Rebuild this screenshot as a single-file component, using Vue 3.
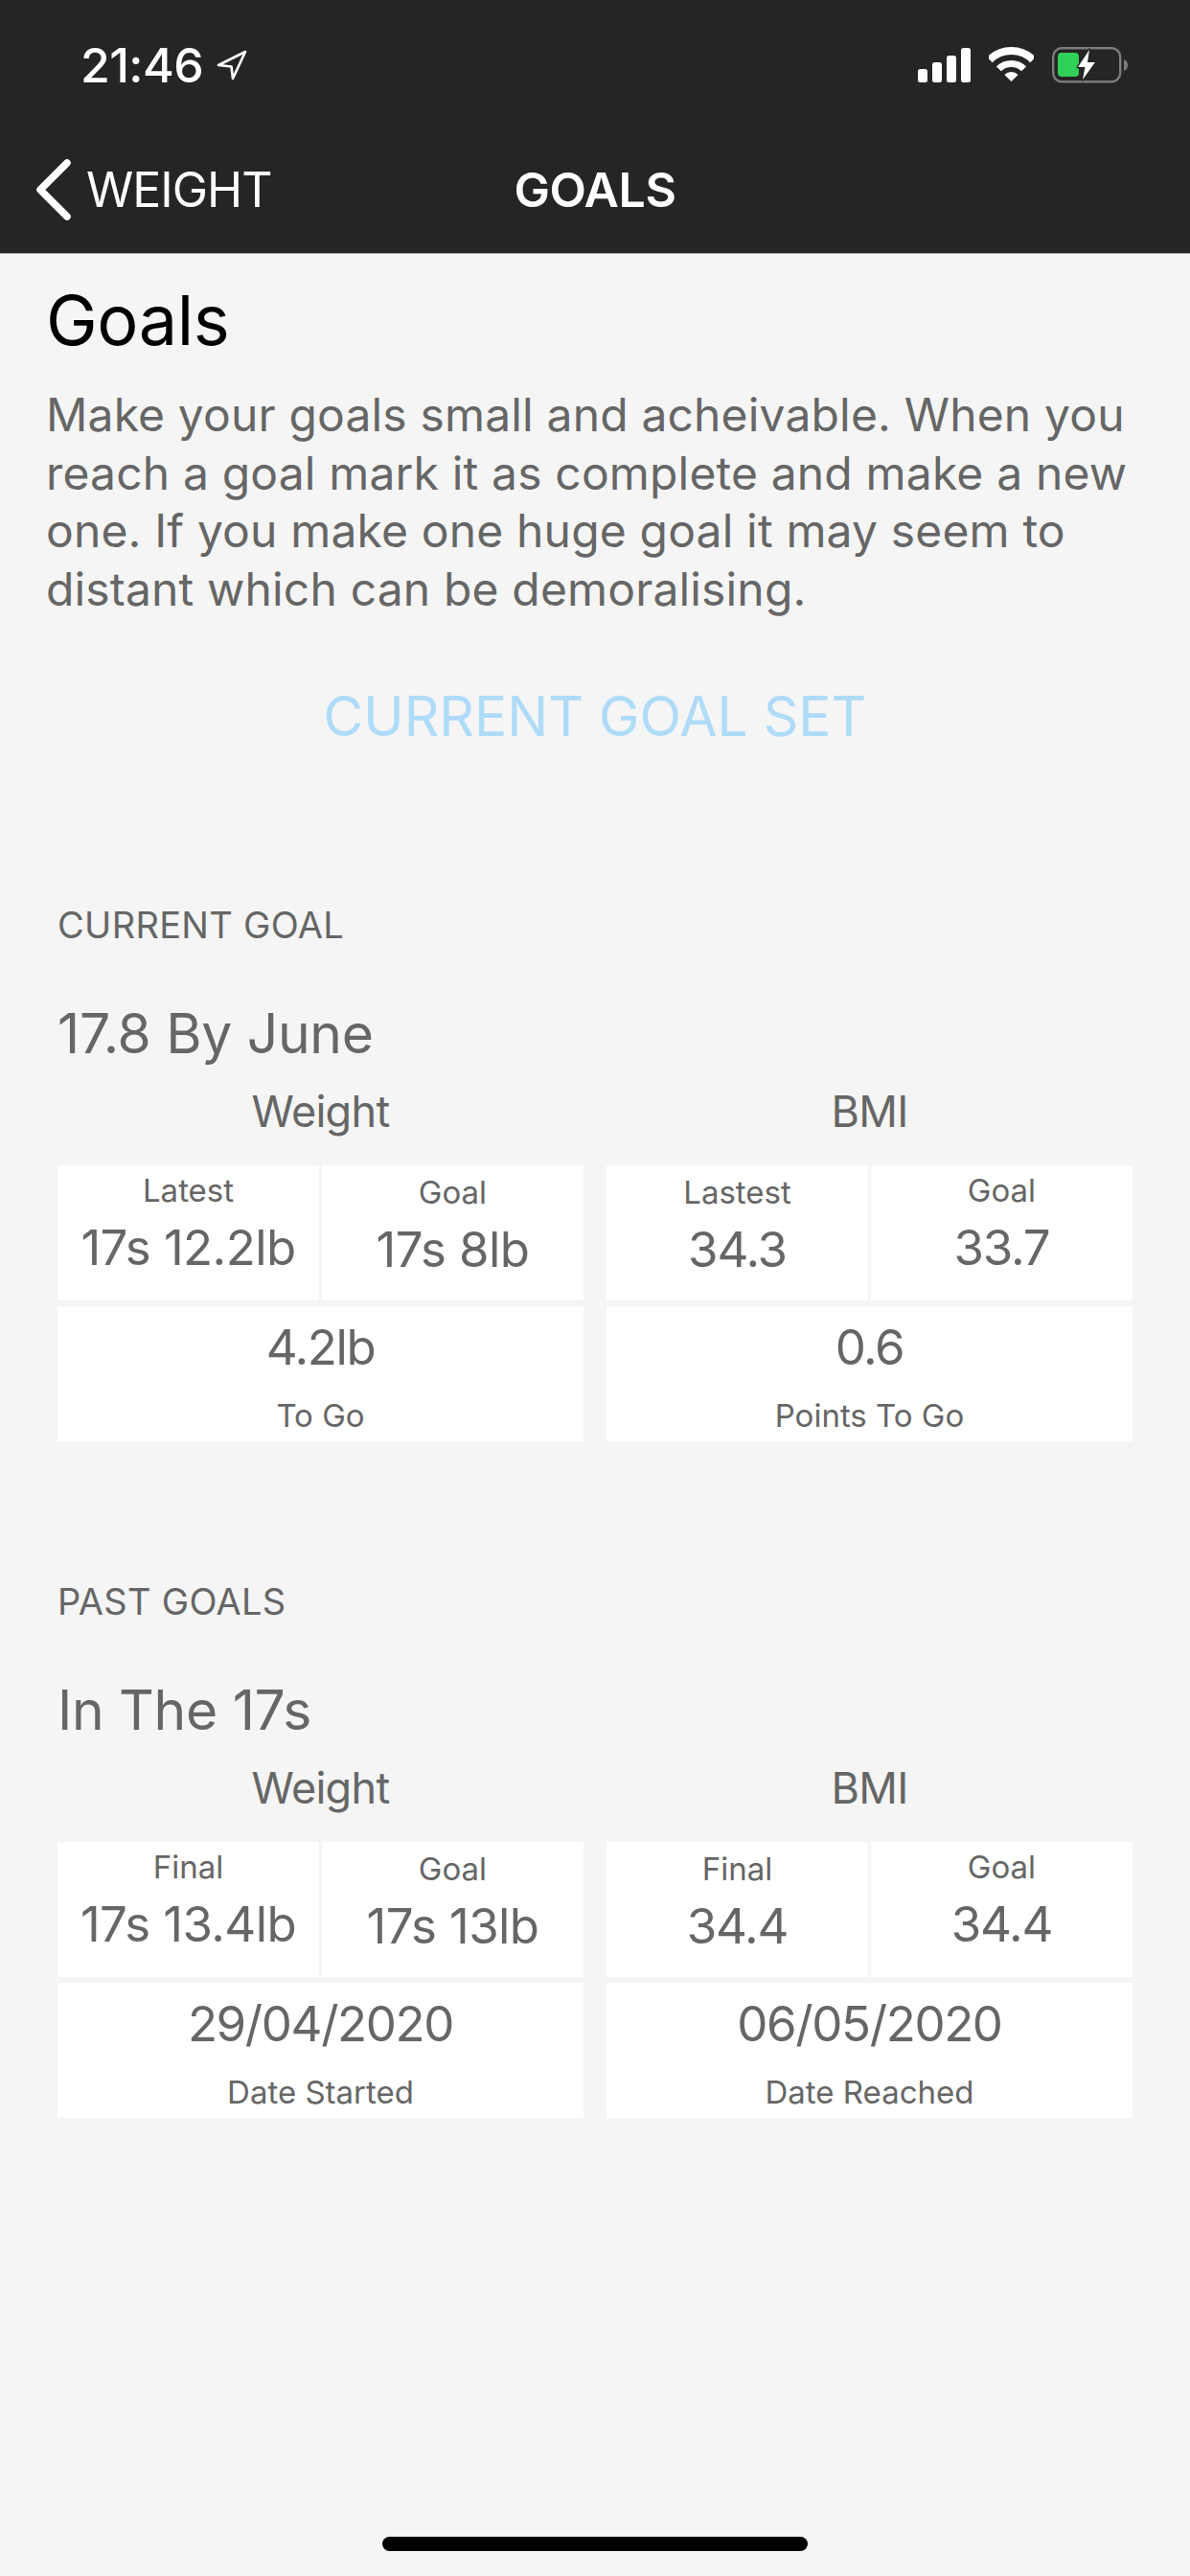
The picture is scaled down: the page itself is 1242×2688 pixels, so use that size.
<script setup>
const sections = [
  {
    label: "CURRENT GOAL",
    name: "17.8 By June",
    columns: [
      {
        title: "Weight",
        cells: [
          { label: "Latest", value: "17s 12.2lb" },
          { label: "Goal", value: "17s 8lb", low: true },
        ],
        footer: { value: "4.2lb", label: "To Go" },
      },
      {
        title: "BMI",
        cells: [
          { label: "Lastest", value: "34.3", low: true },
          { label: "Goal", value: "33.7" },
        ],
        footer: { value: "0.6", label: "Points To Go" },
      },
    ],
  },
  {
    label: "PAST GOALS",
    name: "In The 17s",
    columns: [
      {
        title: "Weight",
        cells: [
          { label: "Final", value: "17s 13.4lb" },
          { label: "Goal", value: "17s 13lb", low: true },
        ],
        footer: { value: "29/04/2020", label: "Date Started" },
      },
      {
        title: "BMI",
        cells: [
          { label: "Final", value: "34.4", low: true },
          { label: "Goal", value: "34.4" },
        ],
        footer: { value: "06/05/2020", label: "Date Reached" },
      },
    ],
  },
];
</script>

<template>
  <div class="page">
    <header class="header">
      <div class="status">
        <div class="clock">
          <span class="time">21:46</span>
          <svg class="arrow" width="32" height="32" viewBox="0 0 32 32">
            <path d="M30 2 L2 16 L15.5 17.5 L17 30 Z" fill="none" stroke="#fff" stroke-width="2.6" stroke-linejoin="round" />
          </svg>
        </div>
        <div class="indicators">
          <svg width="55" height="36" viewBox="0 0 55 36" fill="#fff">
            <rect x="0" y="22" width="10" height="14" rx="2.5" />
            <rect x="15" y="15" width="10" height="21" rx="2.5" />
            <rect x="30" y="8" width="10" height="28" rx="2.5" />
            <rect x="45" y="0" width="10" height="36" rx="2.5" />
          </svg>
          <svg width="47" height="37" viewBox="0 0 47 37" fill="none" stroke="#fff">
            <path d="M0.9 13.4 A32 32 0 0 1 46.1 13.4" stroke-width="8" />
            <path d="M10.4 22.9 A18.5 18.5 0 0 1 36.6 22.9" stroke-width="7" />
            <path d="M23.5 36 L16.4 28.9 A10 10 0 0 1 30.6 28.9 Z" fill="#fff" stroke="none" />
          </svg>
          <svg width="80" height="38" viewBox="0 0 80 38">
            <rect x="1.2" y="1.2" width="70" height="35" rx="9" fill="none" stroke="#7b7b7b" stroke-width="2.4" />
            <path d="M75 13 C78 14 79 16 79 19 C79 22 78 24 75 25 Z" fill="#7b7b7b" />
            <rect x="6" y="6" width="22" height="25" rx="4" fill="#30d158" />
            <path d="M39 3 L27 21 L34.5 21 L32 34 L45 16 L37 16 Z" fill="#fff" stroke="#252525" stroke-width="3" paint-order="stroke" stroke-linejoin="round" />
          </svg>
        </div>
      </div>
      <nav class="nav">
        <div class="back">
          <svg width="38" height="64" viewBox="0 0 38 64">
            <path d="M33 4 L5 32 L33 60" fill="none" stroke="#fff" stroke-width="7.5" stroke-linecap="round" stroke-linejoin="round" />
          </svg>
          <span class="back-text">WEIGHT</span>
        </div>
        <span class="nav-title">GOALS</span>
      </nav>
    </header>

    <main class="content">
      <div class="intro">
        <h1 class="title">Goals</h1>
        <p class="desc">
          Make your goals small and acheivable. When you<br />
          reach a goal mark it as complete and make a new<br />
          one. If you make one huge goal it may seem to<br />
          distant which can be demoralising.
        </p>
        <div class="set-btn">CURRENT GOAL SET</div>
      </div>

      <section v-for="section in sections" :key="section.label" class="section">
        <div class="section-label">{{ section.label }}</div>
        <div class="goal-name">{{ section.name }}</div>
        <div class="columns">
          <div v-for="col in section.columns" :key="col.title" class="column">
            <div class="col-title">{{ col.title }}</div>
            <div class="cells">
              <div v-for="cell in col.cells" :key="cell.label" class="cell">
                <div class="cell-label" :class="{ low: cell.low }">{{ cell.label }}</div>
                <div class="cell-value">{{ cell.value }}</div>
              </div>
            </div>
            <div class="footer-cell">
              <div class="footer-value">{{ col.footer.value }}</div>
              <div class="footer-label">{{ col.footer.label }}</div>
            </div>
          </div>
        </div>
      </section>
    </main>

    <div class="home-bar"></div>
  </div>
</template>

<style scoped>
.page {
  width: 1242px;
  height: 2688px;
  display: flex;
  flex-direction: column;
  background: #f5f5f5;
  font-family: Inter, "Liberation Sans", sans-serif;
  color: #666;
  overflow: hidden;
}

.header {
  height: 265px;
  flex-shrink: 0;
  background: #252525;
  border-bottom: 1px solid #aaa;
  color: #fff;
  box-sizing: border-box;
}

.status {
  height: 132px;
  box-sizing: border-box;
  padding: 3px 64px 0 84px;
  display: flex;
  align-items: center;
  justify-content: space-between;
}

.clock {
  display: flex;
  align-items: center;
  gap: 14px;
}

.time {
  font-size: 50px;
  font-weight: 500;
  letter-spacing: -0.6px;
  line-height: 60px;
}

.indicators {
  display: flex;
  align-items: center;
  gap: 19px;
}

.nav {
  height: 132px;
  display: flex;
  align-items: center;
  justify-content: center;
  position: relative;
}

.back {
  position: absolute;
  left: 37px;
  top: 0;
  height: 132px;
  display: flex;
  align-items: center;
  gap: 15px;
}

.back-text {
  font-size: 50px;
  letter-spacing: -1px;
}

.nav-title {
  font-size: 50px;
  font-weight: 600;
  letter-spacing: -0.4px;
}

.intro {
  padding: 27px 48px 0;
}

.title {
  margin: 0;
  font-size: 72px;
  font-weight: 400;
  line-height: 84px;
  color: #000;
  letter-spacing: -0.4px;
}

.desc {
  margin: 27px 0 0;
  font-size: 48px;
  line-height: 60.5px;
  letter-spacing: 0.16px;
  color: #666;
  white-space: nowrap;
}

.set-btn {
  margin-top: 68px;
  font-size: 57px;
  line-height: 70px;
  text-align: center;
  color: #aedbf8;
}

.section {
  padding: 0 60px;
  margin-top: 142px;
}

.intro + .section {
  margin-top: 157px;
}

.section-label {
  font-size: 38px;
  line-height: 50px;
  letter-spacing: 0.3px;
}

.goal-name {
  margin-top: 54px;
  font-size: 57px;
  line-height: 70px;
  letter-spacing: -0.3px;
}

.columns {
  display: grid;
  grid-template-columns: 549px 549px;
  gap: 24px;
  margin-top: 14px;
}

.col-title {
  font-size: 45px;
  line-height: 60px;
  text-align: center;
  letter-spacing: -0.7px;
  margin: 2px 0 26px;
}

.cells {
  display: grid;
  grid-template-columns: 1fr 1fr;
  gap: 3px;
}

.cell {
  height: 141px;
  box-sizing: border-box;
  padding-top: 6px;
  background: #fff;
  text-align: center;
}

.cell-label {
  font-size: 33px;
  line-height: 40px;
  height: 40px;
}

.cell-label.low {
  padding-top: 2px;
}

.cell-value {
  margin-top: 10px;
  font-size: 51px;
  line-height: 60px;
  letter-spacing: -0.6px;
  white-space: nowrap;
}

.column:last-child .cell-value {
  letter-spacing: -1.2px;
}

.footer-cell {
  height: 141px;
  box-sizing: border-box;
  margin-top: 6px;
  padding-top: 13px;
  background: #fff;
  text-align: center;
}

.footer-value {
  font-size: 51px;
  line-height: 60px;
  letter-spacing: -1.4px;
}

.footer-label {
  margin-top: 21px;
  font-size: 33px;
  line-height: 40px;
}

.home-bar {
  width: 444px;
  height: 15px;
  margin: auto auto 26px;
  border-radius: 8px;
  background: #000;
}
</style>
